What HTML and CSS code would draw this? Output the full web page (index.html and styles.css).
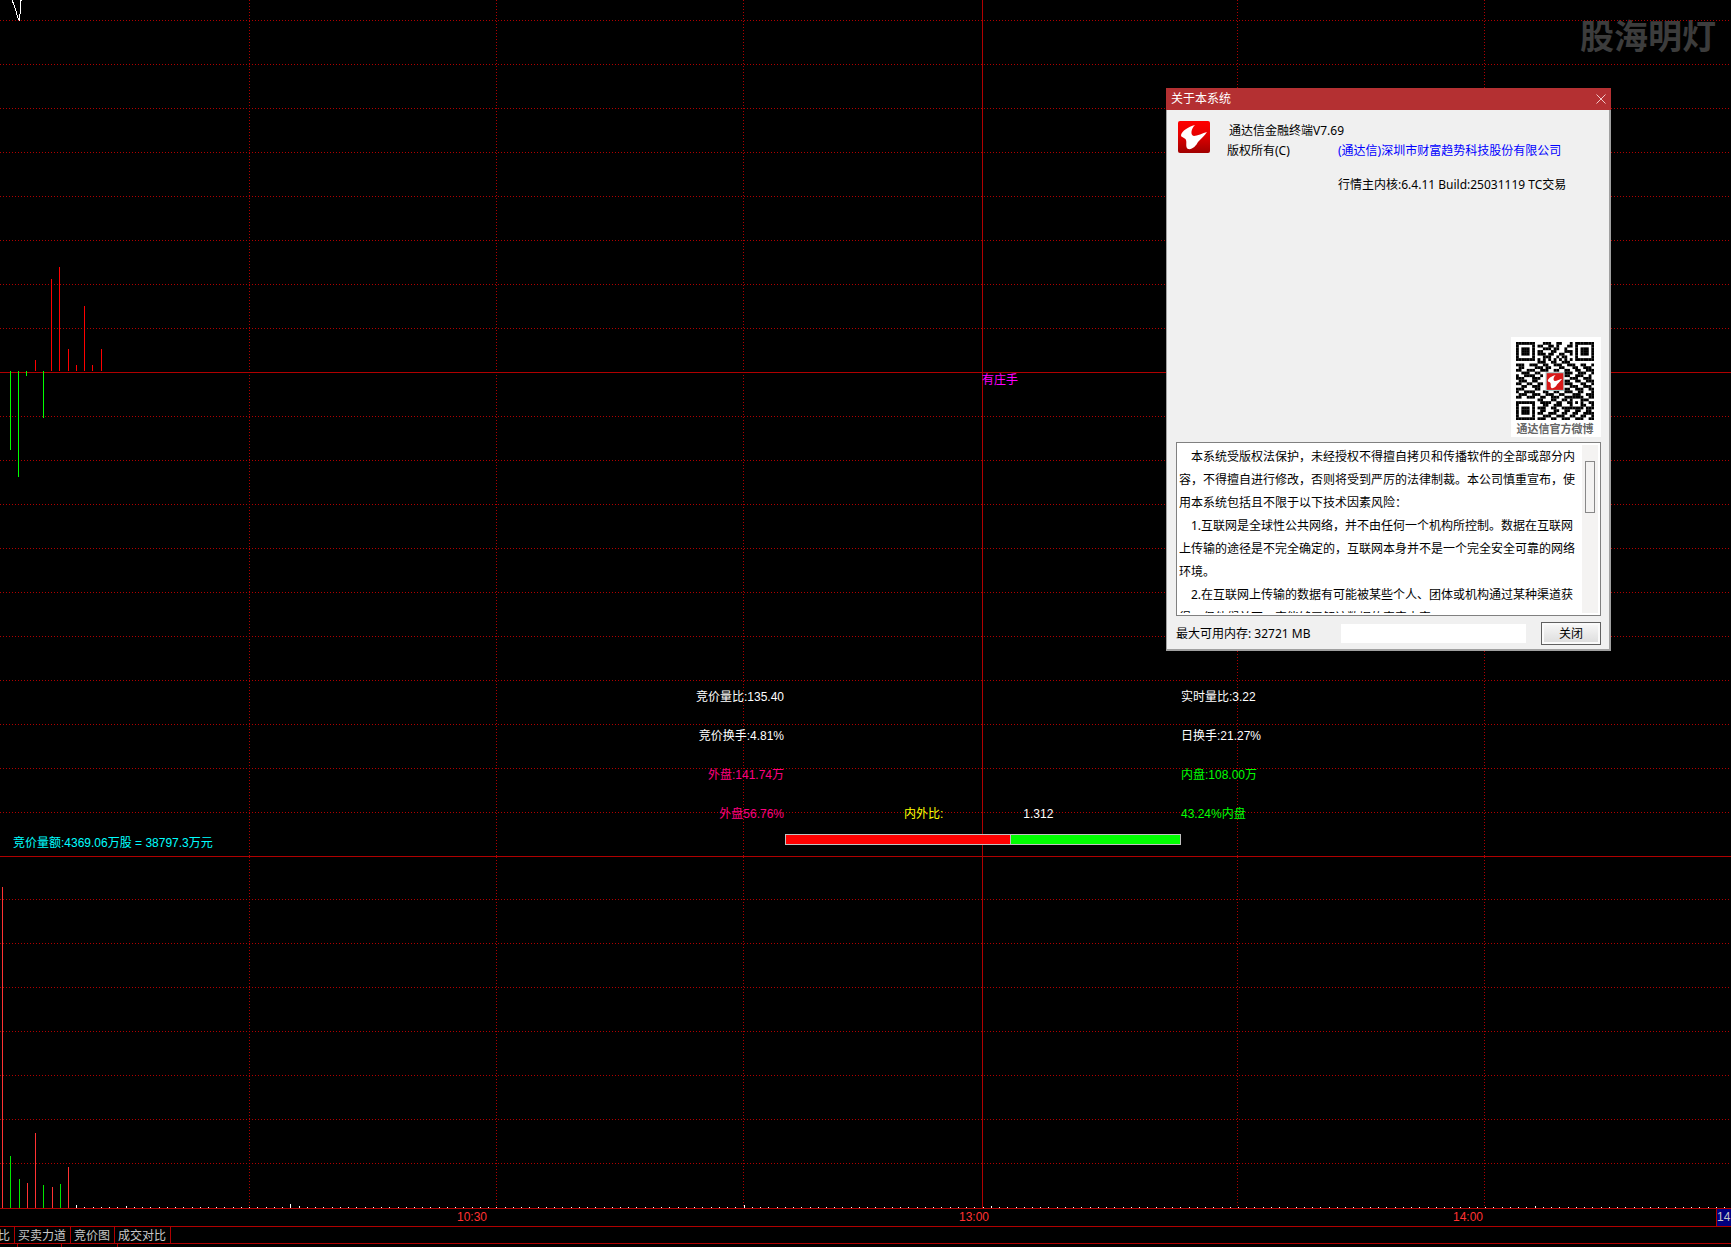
FILE: index.html
```
<!DOCTYPE html>
<html lang="zh-CN">
<head>
    <meta charset="UTF-8">
    <meta name="viewport" content="width=device-width, initial-scale=1.0">
    <title>通达信金融终端</title>
    <link rel="stylesheet" href="styles.css">
</head>
<body>
    <main class="terminal">
        <section class="pane price-pane">
            <div class="watermark">股海明灯</div>
            <svg class="chart" id="priceChart">
                <polyline class="price-line" points="12,0 14,5 19,21 20,14 20,1 22,0"/>
            </svg>
            <span class="signal">有庄手</span>

            <div class="stats">
                <span class="left">竞价量比:135.40</span>
                <span></span>
                <span>实时量比:3.22</span>

                <span class="left">竞价换手:4.81%</span>
                <span></span>
                <span>日换手:21.27%</span>

                <span class="left pink">外盘:141.74万</span>
                <span></span>
                <span class="green">内盘:108.00万</span>

                <span class="left pink">外盘56.76%</span>
                <span class="ratio"><span class="yellow">内外比:</span><span>1.312</span></span>
                <span class="green">43.24%内盘</span>

                <div class="ratio-bar"><i class="bar-out"></i><i class="bar-in"></i></div>
            </div>

            <p class="auction">竞价量额:4369.06万股 = 38797.3万元</p>
        </section>

        <section class="pane volume-pane">
            <svg class="chart" id="volumeChart"></svg>
        </section>

        <div class="time-axis">
            <span class="time time-1">10:30</span>
            <span class="time time-2">13:00</span>
            <span class="time time-3">14:00</span>
            <span class="time-current">14</span>
        </div>

        <nav class="tabs">
            <button type="button" class="cut">比</button>
            <button type="button">买卖力道</button>
            <button type="button">竞价图</button>
            <button type="button">成交对比</button>
        </nav>
        <div class="sub-tabs"><i></i><i></i><i></i></div>
    </main>

    <div class="dialog" role="dialog" aria-labelledby="dialogTitle">
        <div class="dialog-title">
            <span id="dialogTitle">关于本系统</span>
            <button type="button" class="close-x" aria-label="关闭窗口">
                <svg width="10" height="10" viewBox="0 0 10 10"><path d="M0.5 0.5l9 9M9.5 0.5l-9 9"/></svg>
            </button>
        </div>
        <div class="dialog-body">
            <div class="about">
                <svg class="logo" viewBox="0 0 32 32">
                    <defs>
                        <linearGradient id="logoRed" x1="0" y1="0" x2="0" y2="1">
                            <stop offset="0" stop-color="#ff0000"/>
                            <stop offset="0.4" stop-color="#e80000"/>
                            <stop offset="1" stop-color="#a00000"/>
                        </linearGradient>
                    </defs>
                    <rect width="32" height="32" rx="2" fill="url(#logoRed)"/>
                    <path id="logoMark" fill="#fff" d="M17 4C10 6 4 10 3 14C3 17 7 16 8 19C9 22 7 26 10 28C14 29 18 25 20 21C23 18 27 14 29 11C25 12 19 15 16 15C12 14 13 8 17 4Z"/>
                </svg>
                <div class="about-text">
                    <p class="product">通达信金融终端V7.69</p>
                    <p class="owner"><span>版权所有(C)</span><a href="#">(通达信)深圳市财富趋势科技股份有限公司</a></p>
                    <p class="build">行情主内核:6.4.11 Build:25031119 TC交易</p>
                </div>
            </div>

            <div class="qr-card">
                <svg class="qr" id="qrCode" viewBox="0 0 29 29"></svg>
                <span>通达信官方微博</span>
            </div>

            <div class="notice">
                <textarea readonly wrap="off" aria-label="版权与风险声明">　本系统受版权法保护，未经授权不得擅自拷贝和传播软件的全部或部分内
容，不得擅自进行修改，否则将受到严厉的法律制裁。本公司慎重宣布，使
用本系统包括且不限于以下技术因素风险：
　1.互联网是全球性公共网络，并不由任何一个机构所控制。数据在互联网
上传输的途径是不完全确定的，互联网本身并不是一个完全安全可靠的网络
环境。
　2.在互联网上传输的数据有可能被某些个人、团体或机构通过某种渠道获
得，但他们并不一定能够了解该数据的真实内容。</textarea>
                <div class="scrollbar"><i></i></div>
            </div>

            <div class="dialog-footer">
                <label for="memory">最大可用内存: 32721 MB</label>
                <input type="text" id="memory">
                <button type="button" class="close-btn">关闭</button>
            </div>
        </div>
    </div>

    <script src="chart.js"></script>
</body>
</html>
```
FILE: styles.css
```
* {
    margin: 0;
    padding: 0;
    box-sizing: border-box;
}

body {
    background-color: #000;
    color: #fff;
    font: 12px/18px "Liberation Sans", "Noto Sans CJK SC", sans-serif;
    overflow: hidden;
}

button,
input,
textarea {
    font: inherit;
}

.terminal {
    display: flex;
    flex-direction: column;
    min-height: 100vh;
}

.pane {
    position: relative;
    border-bottom: 1px solid #b00000;
}

.price-pane {
    height: 857px;
}

.volume-pane {
    height: 352px;
}

.chart {
    position: relative;
    display: block;
    width: 100%;
    height: 100%;
    shape-rendering: crispEdges;
}

.grid {
    stroke: #b00000;
    stroke-dasharray: 1 2;
}

.axis {
    stroke: #b00000;
}

.price-line {
    fill: none;
    stroke: #fff;
}

.watermark {
    position: absolute;
    top: 11px;
    right: 15px;
    color: #3c3c3c;
    font-family: "Noto Sans CJK SC", sans-serif;
    font-size: 34px;
    font-weight: bold;
    line-height: 48px;
}

.signal {
    position: absolute;
    top: 371px;
    left: 982px;
    color: #ff00ff;
}

/* readings over the lower part of the chart */
.stats {
    position: absolute;
    top: 678px;
    left: 0;
    right: 0;
    display: grid;
    grid-template-columns: 785px 396px 1fr;
    grid-auto-rows: 39px;
    line-height: 39px;
}

.left {
    padding-right: 1px;
    text-align: right;
}

.pink {
    color: #ff007f;
}

.green {
    color: #00ff00;
}

.yellow {
    color: #ffff00;
}

.ratio {
    display: flex;
    gap: 80px;
    padding-left: 119px;
}

.ratio-bar {
    grid-column: 2;
    display: flex;
    height: 11px;
    border: 1px solid #c0c0c0;
}

.bar-out {
    width: 57%;
    background-color: #ff0000;
    border-right: 1px solid #c0c0c0;
}

.bar-in {
    flex: 1;
    background-color: #00ff00;
}

.auction {
    position: absolute;
    left: 13px;
    bottom: 4px;
    color: #00ffff;
}

.time-axis {
    position: relative;
    height: 18px;
    border-bottom: 1px solid #b00000;
    color: #ff3232;
    line-height: 16px;
}

.time {
    position: absolute;
}

.time-1 {
    left: 457px;
}

.time-2 {
    left: 959px;
}

.time-3 {
    left: 1453px;
}

.time-current {
    position: absolute;
    right: 0;
    width: 15px;
    height: 17px;
    overflow: hidden;
    border-left: 1px solid #b00000;
    background-color: #000080;
    color: #c8c8c8;
}

.tabs {
    display: flex;
    height: 17px;
    border-bottom: 1px solid #b00000;
}

.tabs button {
    padding: 1px 4px 0 3px;
    border: none;
    border-right: 1px solid #b00000;
    background: none;
    color: #c8c8c8;
    line-height: 16px;
}

.tabs .cut {
    margin-left: -5px;
}

.sub-tabs {
    display: flex;
    height: 3px;
    padding-left: 17px;
}

.sub-tabs i {
    width: 44px;
    border-left: 1px solid #b00000;
}

.sub-tabs i:nth-child(2) {
    width: 56px;
}

/* about window */
.dialog {
    position: absolute;
    top: 88px;
    right: 120px;
    width: 445px;
    color: #000;
    background-color: #f0f0f0;
    font-family: "Noto Sans", "Noto Sans CJK SC", sans-serif;
}

.dialog-title {
    display: flex;
    align-items: center;
    justify-content: space-between;
    height: 22px;
    padding: 0 5px;
    background-color: #b43032;
    color: #fff;
}

.close-x {
    display: flex;
    border: none;
    background: none;
}

.close-x svg {
    display: block;
    fill: none;
    stroke: #f0c8c8;
}

.dialog-body {
    display: flex;
    flex-direction: column;
    padding: 11px 8px 4px 9px;
    border: solid #a0a0a0;
    border-width: 0 2px 2px 1px;
}

.about {
    display: flex;
    gap: 17px;
    padding-left: 2px;
}

.logo {
    width: 32px;
    height: 32px;
}

.about-text {
    line-height: 20px;
}

.product {
    padding-left: 2px;
}

.owner {
    display: flex;
}

.owner span {
    width: 111px;
}

.owner a {
    color: #0000ff;
    text-decoration: none;
}

.build {
    padding: 14px 0 0 111px;
}

.qr-card {
    align-self: flex-end;
    display: flex;
    flex-direction: column;
    align-items: center;
    width: 90px;
    height: 100px;
    margin: 142px 0 5px;
    padding: 5px 2px 0 0;
    background-color: #fff;
    color: #666;
    font-size: 11px;
    font-weight: bold;
    line-height: 17px;
}

.qr {
    width: 78px;
    height: 78px;
}

.notice {
    display: flex;
    height: 174px;
    padding: 2px;
    border: 1px solid #808080;
    background-color: #fff;
}

.notice textarea {
    flex: 1;
    min-width: 0;
    border: none;
    outline: none;
    resize: none;
    overflow: hidden;
    background: none;
    color: #000;
    line-height: 23px;
}

.scrollbar {
    width: 16px;
    padding: 16px 3px 0;
    background-color: #f4f3f2;
}

.scrollbar i {
    display: block;
    height: 52px;
    border: 1px solid #888;
    background-color: #f4f3f2;
}

.dialog-footer {
    display: flex;
    align-items: center;
    padding-top: 6px;
}

.dialog-footer input {
    width: 185px;
    height: 19px;
    margin: 0 15px 0 auto;
    border: none;
    background-color: #fff;
}

.close-btn {
    width: 60px;
    height: 23px;
    border: 1px solid #606060;
    box-shadow: inset 0 0 0 2px #fafafa;
    background: linear-gradient(#f8f8f8, #dcdcdc);
    color: #000;
    line-height: 20px;
}
```
FILE: chart.js
```
const NS = 'http://www.w3.org/2000/svg';

function add(svg, name, attrs) {
    const el = document.createElementNS(NS, name);
    for (const key in attrs) {
        el.setAttribute(key, attrs[key]);
    }
    svg.appendChild(el);
    return el;
}

function hLine(svg, y, cls) {
    add(svg, 'line', { x1: 0, x2: '100%', y1: y + 0.5, y2: y + 0.5, class: cls });
}

function vLine(svg, x, cls) {
    add(svg, 'line', { x1: x + 0.5, x2: x + 0.5, y1: 0, y2: '100%', class: cls });
}

function bar(svg, x, top, bottom, color) {
    add(svg, 'rect', { x: x, y: top, width: 1, height: bottom - top, fill: color });
}

const columns = [249, 496, 743, 1237, 1484];

// price pane
const price = document.getElementById('priceChart');
for (let y = 20; y < 856; y += 44) {
    hLine(price, y, y === 372 ? 'axis' : 'grid');
}
columns.forEach(x => vLine(price, x, 'grid'));
vLine(price, 982, 'axis');

[
    [10, 450], [18, 477], [26, 376], [43, 418]
].forEach(b => bar(price, b[0], 371, b[1], '#00ff00'));
[
    [35, 360], [51, 279], [59, 267], [68, 349], [76, 365], [84, 306], [92, 365], [101, 349]
].forEach(b => bar(price, b[0], b[1], 371, '#ff0000'));

// volume pane
const volume = document.getElementById('volumeChart');
for (let y = 42; y < 350; y += 44) {
    hLine(volume, y, 'grid');
}
columns.forEach(x => vLine(volume, x, 'grid'));
vLine(volume, 982, 'axis');

const up = '#ff3232';
const down = '#00e600';
[
    [2, 321, up], [10, 52, down], [19, 29, down], [27, 25, up], [35, 75, up],
    [43, 23, down], [52, 21, up], [60, 24, down], [68, 41, up]
].forEach(b => bar(volume, b[0], 351 - b[1], 351, b[2]));

// minutes with almost no volume
const tall = { 9: 3, 15: 2, 35: 4, 36: 2, 90: 3, 120: 2, 186: 2 };
for (let n = 9; n < 260; n++) {
    bar(volume, Math.round(2 + n * 8.24), 351 - (tall[n] || 1), 351, '#ffffff');
}

// QR code
const rows = [
    '11111110001110011000101111111',
    '10000010110011010001101000001',
    '10111010001110110010001011101',
    '10111010110001100011101011101',
    '10111010111011001100101011101',
    '10000010001110010110001000001',
    '11111110101010101010101111111',
    '00000000111001100111000000000',
    '11100111001100111001110011001',
    '01100001110110001100011001110',
    '11001110011100110011001100111',
    '00111001100000000011100111001',
    '10011110010000000011001110010',
    '11100011100000000000111001110',
    '01110011000000000011001100111',
    '11001100110000000011100011001',
    '00110011100000000000111001110',
    '11100001100000000011001110011',
    '10011110001100110011100110001',
    '01110011100111001100011100111',
    '11001110011001110011111110011',
    '00000000110001100110100011100',
    '11111110011110011001101010011',
    '10000010001100111000100011001',
    '10111010111001100111111110111',
    '10111010011000110011001100110',
    '10111010110011100110011001111',
    '10000010001110011100110011001',
    '11111110111001100111001110011'
];
const qr = document.getElementById('qrCode');
rows.forEach((row, y) => {
    [...row].forEach((cell, x) => {
        if (cell === '1') {
            add(qr, 'rect', { x: x, y: y, width: 1.05, height: 1.05, fill: '#000' });
        }
    });
});
add(qr, 'rect', { x: 11.2, y: 11.4, width: 6.6, height: 6.6, fill: '#d81818', stroke: '#a8c8c8', 'stroke-width': 0.4 });
add(qr, 'path', {
    d: document.getElementById('logoMark').getAttribute('d'),
    fill: '#fff',
    transform: 'translate(11.2 11.4) scale(0.206)'
});
```
